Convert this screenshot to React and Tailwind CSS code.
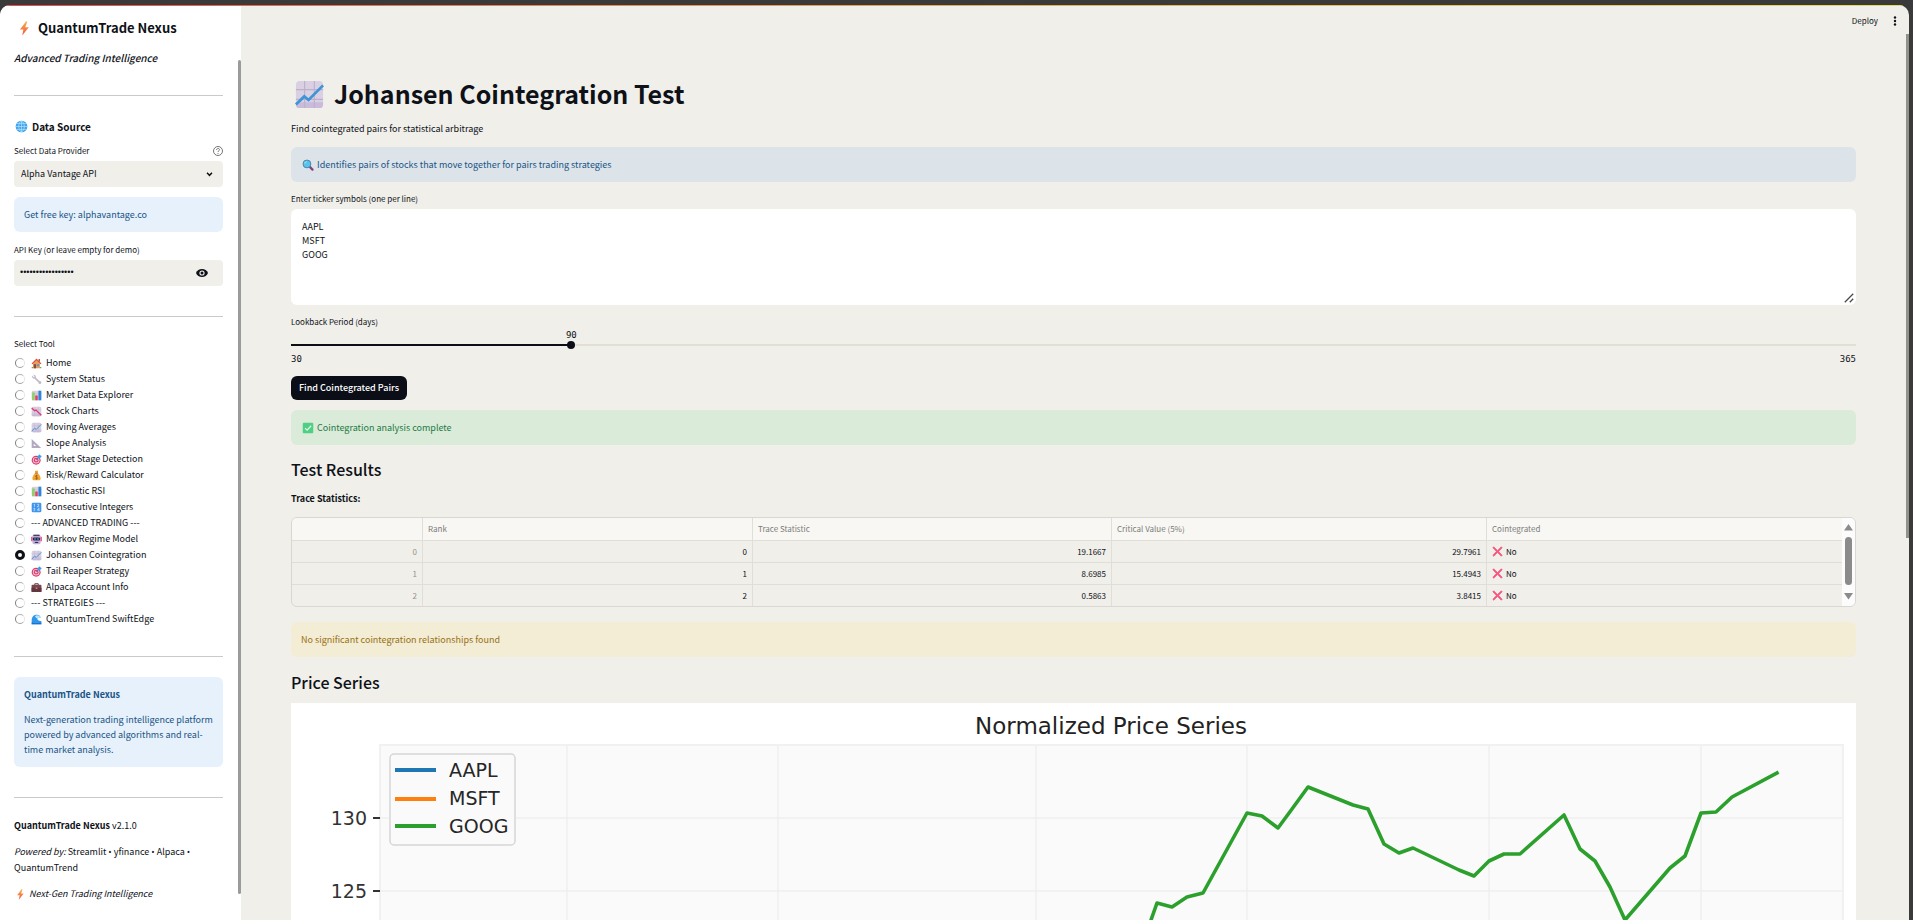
import { useState } from 'react';

const chartPaper = (
  <>
    <rect x="1" y="1" width="14" height="14" rx="2" fill="#d9d0e3" />
    <path d="M1 12h14v1a2 2 0 0 1-2 2H3a2 2 0 0 1-2-2z" fill="#c9bbdb" />
    <path d="M5.5 1v14M10.5 1v14M1 5.5h14M1 10.5h14" stroke="#bcb1c9" strokeWidth=".6" />
  </>
);

const target = (
  <>
    <circle cx="7.5" cy="9" r="6.5" fill="#e0376c" />
    <circle cx="7.5" cy="9" r="4.8" fill="#f4c9d8" />
    <circle cx="7.5" cy="9" r="3.4" fill="#e0376c" />
    <circle cx="7.5" cy="9" r="1.7" fill="#f4c9d8" />
    <path d="M7.5 9l4-4.500" stroke="#2b6fb0" strokeWidth="1.100" />
    <path d="M9.500 6.500V3L13 .2l.7 2.100 2.100.7L12.800 6.500z" fill="#3a9fe8" />
  </>
);

const barChart = (
  <>
    <rect x="1" y="1" width="14" height="14" rx="2" fill="#d9d0e3" />
    <path d="M1 5.500h14M1 10.500h14" stroke="#bcb1c9" strokeWidth=".6" />
    <rect x="1.500" y="3.500" width="4" height="11.500" fill="#8ed16a" />
    <rect x="6.200" y="8" width="3.600" height="7" fill="#e8386f" />
    <rect x="10.800" y="1" width="4.200" height="14" fill="#2f86d8" />
  </>
);

const glyphs = {
  bolt: (
    <>
      <defs>
        <linearGradient id="bolt-fill" x1="0" y1="0" x2="0" y2="1">
          <stop offset="0" stopColor="#fbb04a" />
          <stop offset="1" stopColor="#ee5340" />
        </linearGradient>
      </defs>
      <path d="M9.500.5L3.200 9h3.600L5.600 15.500 12.600 6.600H8.800L11 .5z" fill="url(#bolt-fill)" />
    </>
  ),
  globe: (
    <>
      <circle cx="8" cy="8" r="7.200" fill="#3ea4ee" />
      <path d="M8 .8v14.400M.8 8h14.400M2 4.400h12M2 11.600h12M8 .8c-4.600 4-4.600 10.400 0 14.400M8 .8c4.600 4 4.600 10.400 0 14.400" stroke="#bfe6fb" strokeWidth=".8" fill="none" />
    </>
  ),
  home: (
    <>
      <path d="M3 7.500l5-5 5 5V15H3z" fill="#e9a05c" />
      <path d="M11 1.500h2V6l-2-2z" fill="#a8553a" />
      <path d="M8 .8L.8 8l1.300 1.200L8 3.400l5.900 5.800L15.200 8z" fill="#dd4f3c" />
      <rect x="4" y="9" width="3.400" height="6" fill="#8b4a3a" />
      <rect x="8.800" y="9" width="3" height="3" fill="#3f9fe0" />
      <path d="M1 13h2v2H1zM13 13h2v2h-2z" fill="#6aa84f" />
    </>
  ),
  wrench: (
    <path d="M1.500 2.200l2.600 2.500 1.200-1.200L3 1.200C5 .6 7 1.800 7.200 4l-.1 1 5.300 5.300c1.600-.2 2.900 1 2.700 2.600-.3 1.800-2.700 2.500-3.900 1-.4-.5-.5-1-.4-1.600L5.300 7C3 7.500.7 5 1.500 2.200z" fill="#c3bccd" />
  ),
  bars: barChart,
  down: (
    <>
      {chartPaper}
      <path d="M1 3l4.200 4 2-1L15 13.500" stroke="#e2386f" strokeWidth="1.900" fill="none" />
    </>
  ),
  up: (
    <>
      {chartPaper}
      <path d="M1 13.200L5.300 9l2.200 1.800L15 3.300" stroke="#3d95d8" strokeWidth="1.400" fill="none" />
    </>
  ),
  ruler: (
    <path fillRule="evenodd" d="M1 1.500L14.800 14.500H1zM4 8.500v3.300h3.600z" fill="#b3aabf" />
  ),
  target,
  money: (
    <>
      <path d="M5.500 1h5L9.600 4.200H6.400z" fill="#f0a62e" />
      <path d="M6.200 5h3.600c2.600 2 4.200 4.700 4.200 7.300 0 2-1.200 2.700-3 2.700H5c-1.800 0-3-.7-3-2.700C2 9.700 3.600 7 6.200 5z" fill="#f0a62e" />
      <rect x="5.500" y="4" width="5" height="1.200" fill="#a4562f" />
      <path d="M9.800 8.600C9 7.600 6.500 7.800 6.500 9.300s3.300 1 3.300 2.500-2.700 1.800-3.500.6M8 7.200v6.600" stroke="#8a4f1e" strokeWidth=".9" fill="none" />
    </>
  ),
  numbers: (
    <>
      <rect x="1" y="1" width="14" height="14" rx="2" fill="#3f94ec" />
      <path d="M4 3.500l1-.5v4M9 3.800c.5-1.200 3-.8 2.400.8L9.200 7h2.800M3.500 9.200h2.300L4.500 10.800c2 0 1.600 2.300-.9 1.900M11.500 13V9l-2.300 2.800h3.200" stroke="#e8f3ff" strokeWidth=".9" fill="none" />
    </>
  ),
  robot: (
    <>
      <rect x="2" y="1" width="12" height="14" rx="2.500" fill="#c4b3df" />
      <path d="M3.500 1h9v2h-9z" fill="#4a3c66" />
      <path d="M.2 4h2v6.500h-2zM13.800 4h2v6.500h-2z" fill="#e8467a" />
      <rect x="2.800" y="5" width="10.400" height="4.600" rx="1.500" fill="#2c2540" />
      <circle cx="5.800" cy="7.300" r="1.100" fill="#56c8f5" />
      <circle cx="10.200" cy="7.300" r="1.100" fill="#56c8f5" />
      <path d="M5.500 12.300h5" stroke="#3a2f52" strokeWidth="1.700" />
    </>
  ),
  briefcase: (
    <>
      <path d="M5.500 4.500v-2h5v2" stroke="#4b2b33" strokeWidth="1.300" fill="none" />
      <rect x=".8" y="4" width="14.400" height="10.500" rx="1.500" fill="#7a4650" />
      <path d="M.8 8.500h14.400v6H.8z" fill="#623640" />
      <rect x="6.800" y="8" width="2.400" height="2.200" fill="#d98c4a" />
    </>
  ),
  wave: (
    <>
      <path d="M1 9C1 3.500 5 .8 9 1.200c3 .3 5 2.300 5 4.300-2-1.500-4.500-1-4.800 1C9 9 12 10.500 15 10v5H1z" fill="#2f97ea" />
      <path d="M6 3c3-2 6.500-1 8 2.500-2.200-1.500-4.500-.5-5 1C7.500 6 6 5 6 3z" fill="#bfe7fb" />
      <path d="M1 12.500c4 1.500 9 1.500 14 0V15H1z" fill="#1a70cf" />
    </>
  ),
  search: (
    <>
      <path d="M9.500 9.500l4.500 4.700" stroke="#84457f" strokeWidth="3" strokeLinecap="round" />
      <circle cx="6.600" cy="6.600" r="5.200" fill="#55c4ee" stroke="#4b7d9e" strokeWidth="1.200" />
      <path d="M3.700 6c.2-1.500 1.200-2.300 2.500-2.500" stroke="#c9f0ff" strokeWidth="1" fill="none" />
    </>
  ),
  check: (
    <>
      <rect x="1" y="1" width="14" height="14" rx="1.500" fill="#4fcf83" />
      <path d="M4 8.200l2.800 2.800L12.200 5" stroke="#eafff2" strokeWidth="1.500" fill="none" />
    </>
  ),
  cross: (
    <path d="M2.500 1.200L8 6.500l5.500-5.300 1.300 1.300L9.600 8l5.200 5.500-1.300 1.300L8 9.500l-5.500 5.300-1.300-1.300L6.400 8 1.200 2.500z" fill="#f8557f" stroke="#f8557f" strokeWidth="1" />
  ),
};

function Glyph({ name, className = 'size-[11px]' }) {
  return (
    <svg viewBox="0 0 16 16" aria-hidden="true" className={`shrink-0 ${className}`}>
      {glyphs[name]}
    </svg>
  );
}

const tools = [
  ['home', 'Home'],
  ['wrench', 'System Status'],
  ['bars', 'Market Data Explorer'],
  ['down', 'Stock Charts'],
  ['up', 'Moving Averages'],
  ['ruler', 'Slope Analysis'],
  ['target', 'Market Stage Detection'],
  ['money', 'Risk/Reward Calculator'],
  ['bars', 'Stochastic RSI'],
  ['numbers', 'Consecutive Integers'],
  [null, '--- ADVANCED TRADING ---'],
  ['robot', 'Markov Regime Model'],
  ['up', 'Johansen Cointegration'],
  ['target', 'Tail Reaper Strategy'],
  ['briefcase', 'Alpaca Account Info'],
  [null, '--- STRATEGIES ---'],
  ['wave', 'QuantumTrend SwiftEdge'],
];

const rows = [
  ['0', '0', '19.1667', '29.7961'],
  ['1', '1', '8.6985', '15.4943'],
  ['2', '2', '0.5863', '3.8415'],
];

function Dot() {
  return <>{'\u00a0'}<span className="font-['Open_Sans',sans-serif]">•</span>{' '}</>;
}

function Sidebar() {
  const [tool, setTool] = useState('Johansen Cointegration');
  return (
    <aside className="relative w-[241px] shrink-0 overflow-hidden bg-white pr-[18px] pl-[14px]">
      <h2 className="mt-[10px] flex h-6 items-center gap-[6px] pl-[3px] text-[13px] font-bold">
        <Glyph name="bolt" className="size-[15px]" />
        QuantumTrade Nexus
      </h2>
      <p className="mt-[10px] mb-[29px] text-[10px] leading-4 font-medium italic">Advanced Trading Intelligence</p>
      <hr className="border-[#c9cacc]" />
      <h3 className="mt-5 mb-px flex h-5 items-center gap-1 pl-px text-[10px] font-bold">
        <Glyph name="globe" className="size-[13px]" />
        Data Source
      </h3>
      <div className="mt-2 flex items-center justify-between">
        <label htmlFor="provider" className="text-[8px] leading-[14px]">Select Data Provider</label>
        <svg viewBox="0 0 20 20" className="size-[10px]" fill="none" stroke="#666" strokeWidth="1.800">
          <circle cx="10" cy="10" r="9" />
          <path d="M7 8c0-4 6-4 6-.5 0 2-3 2-3 4.500M10 14v1.800" />
        </svg>
      </div>
      <div className="relative mt-[3px]">
        <select id="provider" className="block h-[26px] w-full appearance-none rounded bg-[#f0efea] px-[7px] text-[9px]">
          <option>Alpha Vantage API</option>
        </select>
        <svg viewBox="0 0 8 6" className="pointer-events-none absolute top-[11px] right-[10px] h-[5px] w-[7px]" fill="none" stroke="#111" strokeWidth="1.800">
          <path d="M1 1l3 3 3-3" />
        </svg>
      </div>
      <div className="mt-[10px] flex h-[35px] items-center rounded-md bg-[#e6f1fc] px-[10px] text-[9px] text-[#1a5485]">
        <p>Get free key: <a href="#alphavantage">alphavantage.co</a></p>
      </div>
      <label htmlFor="apikey" className="mt-[11px] block text-[8px] leading-[14px]">API Key (or leave empty for demo)</label>
      <div className="mt-[3px] flex h-[26px] items-center rounded bg-[#f0efea] pr-[15px] pl-[6px]">
        <input id="apikey" type="password" defaultValue="abcdefghijklmnopq" className="w-full min-w-0 bg-transparent font-['Liberation_Sans',sans-serif] text-[9px] outline-none" />
        <button type="button" aria-label="Show password">
          <svg viewBox="0 0 24 16" className="h-2 w-3">
            <path d="M12 0C6.500 0 2 3 0 8c2 5 6.500 8 12 8s10-3 12-8c-2-5-6.500-8-12-8z" fill="#0e1117" />
            <circle cx="12" cy="8" r="5.200" fill="#f0efea" />
            <circle cx="12" cy="8" r="3" fill="#0e1117" />
          </svg>
        </button>
      </div>
      <hr className="mt-[30px] border-[#c9cacc]" />
      <fieldset className="mt-5">
        <legend className="mb-1 text-[8px] leading-[14px]">Select Tool</legend>
        {tools.map(([icon, name]) => (
          <label key={name} className="flex h-4 items-center pl-px text-[9px] whitespace-nowrap">
            <input
              type="radio"
              name="tool"
              checked={tool === name}
              onChange={() => setTool(name)}
              className="mr-[6px] size-[10px] shrink-0 appearance-none rounded-full border border-t-[#b4b4b4] border-r-[#e4e4e4] border-b-[#9e9e9e] border-l-[#7e7e7e] checked:border-[3px] checked:border-[#0e1117]"
            />
            {icon && <Glyph name={icon} className="mr-1 size-[11px]" />}
            {name}
          </label>
        ))}
      </fieldset>
      <hr className="mt-[29px] border-[#c9cacc]" />
      <div className="mt-5 rounded-md bg-[#e6f1fc] p-[10px] pr-1 text-[9px] text-[#1a5485]">
        <p className="leading-4 font-bold">QuantumTrade Nexus</p>
        <p className="mt-[9px] leading-[15px]">Next-generation trading intelligence platform powered by advanced algorithms and real-time market analysis.</p>
      </div>
      <hr className="mt-[30px] border-[#c9cacc]" />
      <div className="mt-5 flex flex-col gap-[10px] text-[9px] leading-4">
        <p><strong>QuantumTrade Nexus</strong> v2.1.0</p>
        <p><em>Powered by:</em> Streamlit<Dot />yfinance<Dot />Alpaca<Dot />QuantumTrend</p>
        <p className="flex items-center gap-[3px] pl-px">
          <Glyph name="bolt" />
          <em>Next-Gen Trading Intelligence</em>
        </p>
      </div>
      <div aria-hidden="true" className="absolute top-[54px] right-0 bottom-[26px] w-[3px] rounded bg-[#9b9b9b]" />
    </aside>
  );
}

function Alert({ tone, children }) {
  return <div className={`flex h-[35px] items-center gap-[3px] rounded-md px-[10px] text-[9px] ${tone}`}>{children}</div>;
}

function Lookback() {
  const [days, setDays] = useState(90);
  const percent = ((days - 30) / 335) * 100;
  return (
    <div className="mt-[10px]">
      <label htmlFor="lookback" className="block text-[8px] leading-[14px]">Lookback Period (days)</label>
      <div className="relative h-[10px] font-['DejaVu_Sans_Mono',monospace] text-[9px] leading-[12px]">
        <output htmlFor="lookback" className="absolute -translate-x-1/2" style={{ left: `${percent}%` }}>{days}</output>
      </div>
      <div className="relative mt-px flex h-[10px] items-center">
        <div className="h-[2px] w-full bg-[#e1e0d3]">
          <div className="h-full bg-[#0b0e17]" style={{ width: `${percent}%` }} />
        </div>
        <input
          id="lookback"
          type="range"
          min="30"
          max="365"
          value={days}
          onChange={(e) => setDays(Number(e.target.value))}
          className="absolute inset-y-0 -left-1 w-[calc(100%+8px)] appearance-none bg-transparent [&::-webkit-slider-thumb]:size-2 [&::-webkit-slider-thumb]:appearance-none [&::-webkit-slider-thumb]:rounded-full [&::-webkit-slider-thumb]:bg-[#0b0e17]"
        />
      </div>
      <div className="mt-[2px] flex justify-between font-['DejaVu_Sans_Mono',monospace] text-[9px] leading-[14px]">
        <span>30</span>
        <span>365</span>
      </div>
    </div>
  );
}

function ResultsTable() {
  const line = 'border-r border-b border-[#dfded9]';
  return (
    <div className="mt-[10px] flex h-[90px] overflow-hidden rounded-md border border-[#d8d7d2]">
      <table className="w-full table-fixed border-separate border-spacing-0 text-[8px]">
        <colgroup>
          <col className="w-[131px]" />
          <col className="w-[330px]" />
          <col className="w-[359px]" />
          <col className="w-[375px]" />
          <col />
        </colgroup>
        <thead className="bg-[#f8f7f3] text-left text-[#7b7b7a]">
          <tr className="h-[23px]">
            <th aria-label="Index" className={line} />
            {['Rank', 'Trace Statistic', 'Critical Value (5%)'].map((h) => (
              <th key={h} className={`px-[5px] font-normal ${line}`}>{h}</th>
            ))}
            <th className="border-b border-[#dfded9] px-[5px] font-normal">Cointegrated</th>
          </tr>
        </thead>
        <tbody>
          {rows.map(([index, ...cells]) => (
            <tr key={index} className="h-[22px]">
              <th className={`px-[5px] text-right font-normal text-[#93928e] ${line}`}>{index}</th>
              {cells.map((c, i) => (
                <td key={i} className={`px-[5px] text-right ${line}`}>{c}</td>
              ))}
              <td className="border-b border-[#dfded9] px-[5px]">
                <span className="flex items-center gap-[3px]">
                  <Glyph name="cross" className="size-[11px]" />
                  No
                </span>
              </td>
            </tr>
          ))}
        </tbody>
      </table>
      <div aria-hidden="true" className="flex w-[13px] shrink-0 flex-col items-center bg-[#fcfcfc] pt-[6px] pb-[6px]">
        <svg viewBox="0 0 9 7" className="h-[7px] w-[9px]"><path d="M4.500 0L9 6.500H0z" fill="#8b8b8b" /></svg>
        <div className="mt-[6px] mb-[8px] w-[7px] flex-1 rounded-full bg-[#8b8b8b]" />
        <svg viewBox="0 0 9 7" className="h-[7px] w-[9px]"><path d="M4.500 6.500L9 0H0z" fill="#8b8b8b" /></svg>
      </div>
    </div>
  );
}

const goog = '852,250 860,217 866,200 881,204 896,194 912,190 956,110 971,113 987,125 1001,106 1017,84 1062,102 1077,106 1093,141 1108,150 1122,145 1168,167 1183,173 1198,158 1213,151 1229,151 1273,112 1289,146 1304,158 1319,184 1334,217 1379,165 1394,153 1410,110 1425,109 1441,94 1486,70';

function PriceChart() {
  return (
    <svg viewBox="0 0 1565 783" role="img" aria-label="Normalized Price Series" className="mt-[9px] block w-full bg-white font-['DejaVu_Sans',sans-serif]">
      <rect x="89" y="42" width="1463" height="700" fill="#fafafa" stroke="#f1f1f1" strokeWidth="2" />
      <path d="M276 42v700M487 42v700M745 42v700M956 42v700M1198 42v700M1410 42v700M89 115h1463M89 188h1463" stroke="#efefef" strokeWidth="1.500" />
      <path d="M82 115h7M82 188h7" stroke="#333" strokeWidth="2" />
      <text x="820" y="31" textAnchor="middle" fontSize="23" fill="#222">Normalized Price Series</text>
      <g fontSize="19" fill="#333" textAnchor="end">
        <text x="76" y="122">130</text>
        <text x="76" y="195">125</text>
      </g>
      <polyline points={goog} fill="none" stroke="#2ca02c" strokeWidth="3.600" strokeLinejoin="round" strokeLinecap="square" />
      <rect x="99" y="51" width="125" height="91" rx="4" fill="#fafafa" stroke="#d6d6d6" strokeWidth="1.500" />
      <g strokeWidth="4">
        <path d="M104 67h41" stroke="#1f77b4" />
        <path d="M104 96h41" stroke="#ff7f0e" />
        <path d="M104 123h41" stroke="#2ca02c" />
      </g>
      <g fontSize="19" fill="#262626">
        <text x="158" y="74">AAPL</text>
        <text x="158" y="102">MSFT</text>
        <text x="158" y="130">GOOG</text>
      </g>
    </svg>
  );
}

export default function App() {
  return (
    <div className="h-screen overflow-hidden bg-[#3a3a3a] pt-[5px] pr-1 font-['Noto_Sans_CJK_SC','Open_Sans',sans-serif] text-[#0e1117]">
      <div className="flex h-full flex-col overflow-hidden rounded-t-[10px] bg-[#f0efea]">
        <div className="h-px shrink-0 bg-linear-to-r from-[#e5484d] via-[#eba94e] to-[#e6dc5a]" />
        <div className="flex min-h-0 flex-1">
          <Sidebar />
          <main className="relative min-w-0 flex-1 overflow-hidden pr-[53px] pl-[50px]">
            <header className="-mr-[53px] flex h-[30px] items-center justify-end gap-[15px] pr-3">
              <button type="button" className="text-[8px]">Deploy</button>
              <button type="button" aria-label="Menu">
                <svg viewBox="0 0 4 10" className="h-[10px] w-1" fill="#0e1117">
                  <circle cx="2" cy="1.500" r="1.200" />
                  <circle cx="2" cy="5" r="1.200" />
                  <circle cx="2" cy="8.500" r="1.200" />
                </svg>
              </button>
            </header>
            <h1 className="mt-10 flex h-9 items-center gap-[9px] pl-[3px] text-[25px] font-bold">
              <Glyph name="up" className="size-[31px]" />
              Johansen Cointegration Test
            </h1>
            <p className="mt-[9px] mb-[10px] text-[9px] leading-4">Find cointegrated pairs for statistical arbitrage</p>
            <Alert tone="bg-[#dce4ea] text-[#1a5485]">
              <Glyph name="search" className="ml-px size-[12px]" />
              Identifies pairs of stocks that move together for pairs trading strategies
            </Alert>
            <label htmlFor="tickers" className="mt-[10px] mb-[3px] block text-[8px] leading-[14px]">Enter ticker symbols (one per line)</label>
            <div className="relative">
              <textarea id="tickers" defaultValue={'AAPL\nMSFT\nGOOG'} className="block h-[96px] w-full resize-none rounded-md bg-white px-[11px] py-[11px] text-[9px] leading-[14px] outline-none" />
              <svg viewBox="0 0 10 10" aria-hidden="true" className="absolute right-[2px] bottom-[2px] size-[10px]" stroke="#4a4a4a" strokeWidth="1.300">
                <path d="M.8 9.200L9.200.8M5.800 9.200L9.200 5.800" />
              </svg>
            </div>
            <Lookback />
            <button type="button" className="mt-[10px] mb-[10px] block h-6 rounded-md bg-[#0b0e17] px-2 text-[9px] font-medium text-white">Find Cointegrated Pairs</button>
            <Alert tone="bg-[#dbebd9] text-[#237a45]">
              <Glyph name="check" className="ml-px size-[12px]" />
              Cointegration analysis complete
            </Alert>
            <h2 className="mt-3 text-[16px] leading-6 font-medium">Test Results</h2>
            <p className="mt-[10px] text-[9px] leading-4 font-bold">Trace Statistics:</p>
            <ResultsTable />
            <div className="mt-[15px]">
              <Alert tone="bg-[#f2edd4] text-[#9a7014]">No significant cointegration relationships found</Alert>
            </div>
            <h2 className="mt-[13px] text-[16px] leading-6 font-medium">Price Series</h2>
            <PriceChart />
            <div aria-hidden="true" className="absolute top-[28px] right-0 h-[504px] w-[3px] bg-[#92928d]" />
          </main>
        </div>
      </div>
    </div>
  );
}
